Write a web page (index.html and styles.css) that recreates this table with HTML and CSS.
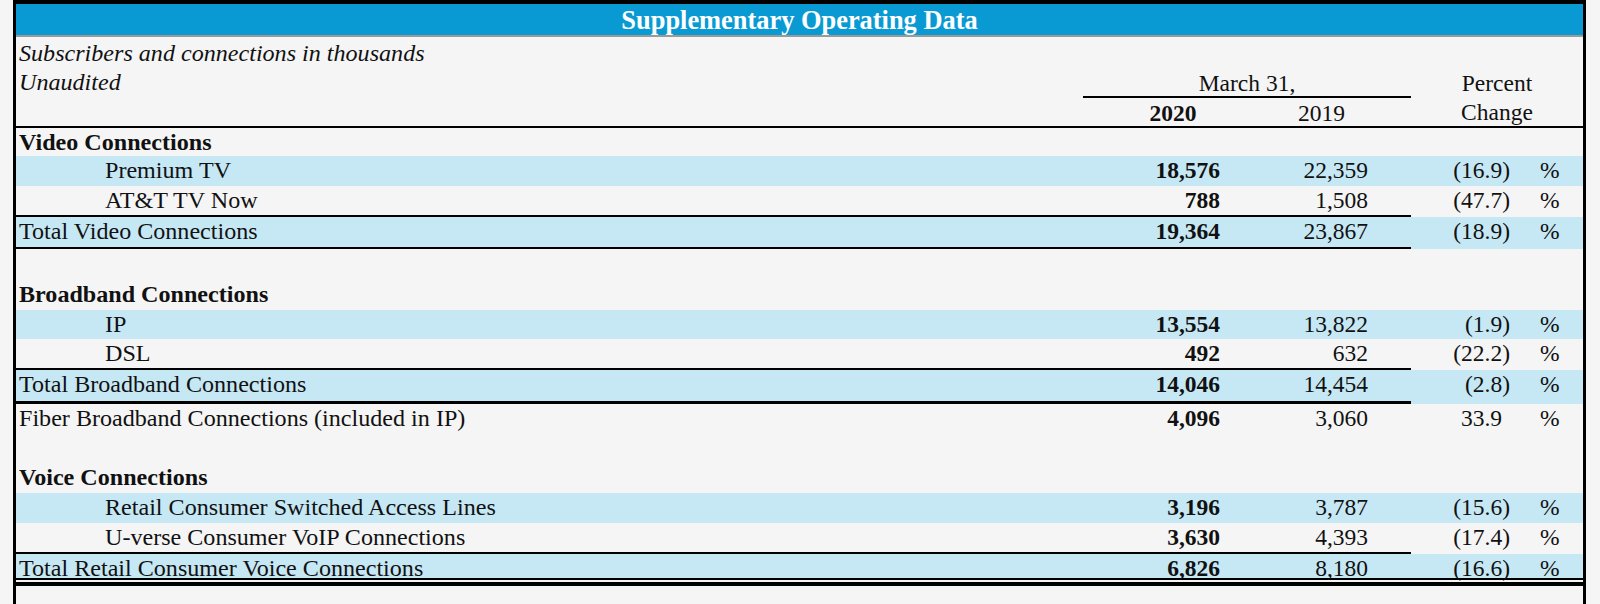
FILE: index.html
```html
<!DOCTYPE html>
<html>
<head>
<meta charset="utf-8">
<link rel="stylesheet" href="styles.css">
</head>
<body>
<div class="sheet">
  <div class="title">Supplementary Operating Data</div>
  <div class="head">
    <div class="note">Subscribers and connections in thousands<br>Unaudited</div>
    <div class="h-date">March 31,</div>
    <div class="h-pct">Percent<br>Change</div>
    <div class="h-y1">2020</div>
    <div class="h-y2">2019</div>
  </div>

  <div class="row sec h28"><div class="lbl b">Video Connections</div></div>
  <div class="row blue h30"><div class="lbl ind">Premium TV</div><div class="n b">18,576</div><div class="n2">22,359</div><div class="p">(16.9)</div><div class="pc">%</div></div>
  <div class="row h29 ul"><div class="lbl ind">AT&amp;T TV Now</div><div class="n b">788</div><div class="n2">1,508</div><div class="p">(47.7)</div><div class="pc">%</div></div>
  <div class="row blue h30 ul"><div class="lbl">Total Video Connections</div><div class="n b">19,364</div><div class="n2">23,867</div><div class="p">(18.9)</div><div class="pc">%</div></div>
  <div class="row h31"></div>

  <div class="row sec h30"><div class="lbl b">Broadband Connections</div></div>
  <div class="row blue h29"><div class="lbl ind">IP</div><div class="n b">13,554</div><div class="n2">13,822</div><div class="p">(1.9)</div><div class="pc">%</div></div>
  <div class="row h29 ul"><div class="lbl ind">DSL</div><div class="n b">492</div><div class="n2">632</div><div class="p">(22.2)</div><div class="pc">%</div></div>
  <div class="row blue h31 ul ul3"><div class="lbl">Total Broadband Connections</div><div class="n b">14,046</div><div class="n2">14,454</div><div class="p">(2.8)</div><div class="pc">%</div></div>
  <div class="row h30"><div class="lbl">Fiber Broadband Connections (included in IP)</div><div class="n b">4,096</div><div class="n2">3,060</div><div class="p pos">33.9</div><div class="pc">%</div></div>
  <div class="row h29"></div>

  <div class="row sec h30"><div class="lbl b">Voice Connections</div></div>
  <div class="row blue h30"><div class="lbl ind">Retail Consumer Switched Access Lines</div><div class="n b">3,196</div><div class="n2">3,787</div><div class="p">(15.6)</div><div class="pc">%</div></div>
  <div class="row h29 ul"><div class="lbl ind">U-verse Consumer VoIP Connections</div><div class="n b">3,630</div><div class="n2">4,393</div><div class="p">(17.4)</div><div class="pc">%</div></div>
  <div class="row blue h24 last"><div class="lbl">Total Retail Consumer Voice Connections</div><div class="n b">6,826</div><div class="n2">8,180</div><div class="p">(16.6)</div><div class="pc">%</div></div>
  <div class="dbl"></div>
  <div class="tail"></div>
</div>
</body>
</html>
```

FILE: styles.css
```css
html, body {
  margin: 0;
  padding: 0;
  background: #f5f5f5;
}
body {
  font-family: "Liberation Serif", "Times New Roman", serif;
  color: #111;
  overflow: hidden;
}
.sheet {
  margin-left: 13px;
  width: 1567px;
  border-left: 3px solid #000;
  border-right: 3px solid #000;
  border-top: 4px solid #000;
  background: #f5f5f5;
}
.title {
  height: 31px;
  line-height: 32px;
  background: #0a9ad3;
  color: #fff;
  font-weight: bold;
  font-size: 26.4px;
  text-align: center;
  border-bottom: 2px solid #9a9a9a;
}
.head {
  display: grid;
  grid-template-columns: 1067px 164px 164px 109px 63px;
  grid-template-rows: 61px 28px;
  border-bottom: 2px solid #000;
  font-size: 23.5px;
}
.note {
  grid-column: 1;
  grid-row: 1 / span 2;
  font-style: italic;
  font-size: 24.1px;
  line-height: 29.3px;
  padding-left: 3px;
  padding-top: 2px;
}
.h-date {
  grid-column: 2 / span 2;
  grid-row: 1;
  border-bottom: 2px solid #000;
  text-align: center;
  line-height: 26px;
  padding-top: 33px;
}
.h-pct {
  grid-column: 4 / span 2;
  grid-row: 1 / span 2;
  text-align: center;
  padding-top: 32px;
  line-height: 29px;
}
.h-y1 {
  grid-column: 2;
  grid-row: 2;
  text-align: center;
  font-weight: bold;
  padding-left: 16px;
  padding-top: 4px;
  line-height: 22px;
}
.h-y2 {
  grid-column: 3;
  grid-row: 2;
  text-align: center;
  padding-right: 15px;
  padding-top: 4px;
  line-height: 22px;
}
.row {
  display: grid;
  grid-template-columns: 1067px 164px 164px 109px 63px;
  line-height: 29px;
  font-size: 23.5px;
}
.row > div {
  box-sizing: border-box;
}
.h24 { height: 24px; }
.h28 { height: 28px; }
.h29 { height: 29px; }
.h30 { height: 30px; }
.h31 { height: 31px; }
.blue { background: #c6e8f5; }
.lbl {
  font-size: 24.1px;
  padding-left: 3px;
  white-space: nowrap;
}
.lbl.ind { padding-left: 89px; }
.b { font-weight: bold; }
.n {
  text-align: right;
  padding-right: 27px;
}
.n2 {
  text-align: right;
  padding-right: 43px;
}
.p {
  text-align: right;
  padding-right: 10px;
}
.p.pos { padding-right: 18px; }
.pc {
  padding-left: 20px;
}
.row.ul {
  border-bottom: 2px solid transparent;
  box-sizing: content-box;
}
.row.ul > .lbl,
.row.ul > .n,
.row.ul > .n2 {
  border-bottom: 2px solid #000;
  margin-bottom: -2px;
  height: calc(100% + 2px);
}
.row.ul3 { border-bottom-width: 3px; }
.row.ul3 > .lbl,
.row.ul3 > .n,
.row.ul3 > .n2 {
  border-bottom-width: 3px;
  margin-bottom: -3px;
  height: calc(100% + 3px);
}
.row.last {
  border-bottom: 2px solid #000;
}
.dbl {
  height: 2px;
  border-bottom: 4px solid #000;
}
.tail {
  height: 40px;
}
```
